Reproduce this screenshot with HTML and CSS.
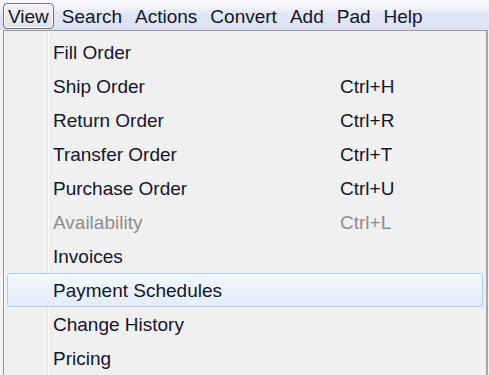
FILE: index.html
```html
<!DOCTYPE html>
<html>
<head>
<meta charset="utf-8">
<link rel="stylesheet" href="styles.css">
</head>
<body>
<div class="menubar">
  <span class="mb-item active">View</span>
  <span class="mb-item">Search</span>
  <span class="mb-item">Actions</span>
  <span class="mb-item">Convert</span>
  <span class="mb-item">Add</span>
  <span class="mb-item">Pad</span>
  <span class="mb-item">Help</span>
</div>
<div class="menu">
  <div class="row"><span>Fill Order</span><span></span></div>
  <div class="row"><span>Ship Order</span><span>Ctrl+H</span></div>
  <div class="row"><span>Return Order</span><span>Ctrl+R</span></div>
  <div class="row"><span>Transfer Order</span><span>Ctrl+T</span></div>
  <div class="row"><span>Purchase Order</span><span>Ctrl+U</span></div>
  <div class="row disabled"><span>Availability</span><span>Ctrl+L</span></div>
  <div class="row"><span>Invoices</span><span></span></div>
  <div class="row hover"><span>Payment Schedules</span><span></span></div>
  <div class="row"><span>Change History</span><span></span></div>
  <div class="row"><span>Pricing</span><span></span></div>
</div>
</body>
</html>
```
FILE: styles.css
```css
html, body {
  margin: 0;
  padding: 0;
}
body {
  width: 489px;
  height: 375px;
  overflow: hidden;
  background: #f3f3f3;
  font-family: "Liberation Sans", Arial, sans-serif;
  font-size: 19px;
  color: #15152a;
}
.menubar {
  height: 30px;
  display: flex;
  align-items: stretch;
  gap: 3px;
  padding-left: 3px;
  box-sizing: border-box;
  background: linear-gradient(to bottom, #f7f8fc 0px, #f1f3fa 8px, #e0e6f5 14px, #dbe2f3 30px);
}
.mb-item {
  display: flex;
  align-items: center;
  padding: 0 4px;
  margin-top: 3px;
  margin-bottom: 1px;
  border: 1px solid transparent;
  border-radius: 4px;
  box-sizing: border-box;
  line-height: 1;
}
.mb-item.active {
  border-color: #707378;
  background: linear-gradient(to bottom, #f2f3f5, #dfe2e8);
  box-shadow: inset 0 0 0 1px #f8f9fb;
}
.menu {
  margin-left: 3px;
  width: 485px;
  height: 360px;
  box-sizing: border-box;
  border: 1px solid #979797;
  border-right: 2px solid #a6a6a6;
  border-bottom: none;
  padding-top: 4px;
  background:
    linear-gradient(to right, transparent 43px, #e2e2e2 43px, #e2e2e2 44px, #ffffff 44px, #ffffff 45px, transparent 45px),
    #f0f0f0;
}
.row {
  height: 34px;
  margin: 0 3px;
  padding-left: 45px;
  box-sizing: border-box;
  display: grid;
  grid-template-columns: 287px auto;
  align-items: center;
  border: 1px solid transparent;
  border-radius: 3px;
}
.row > span {
  line-height: 1;
}
.row.disabled {
  color: #8e8e8e;
}
.row.hover {
  border-color: #aecbf0;
  background: linear-gradient(to bottom, #f4f8fd, #e4ecf8);
}
```
